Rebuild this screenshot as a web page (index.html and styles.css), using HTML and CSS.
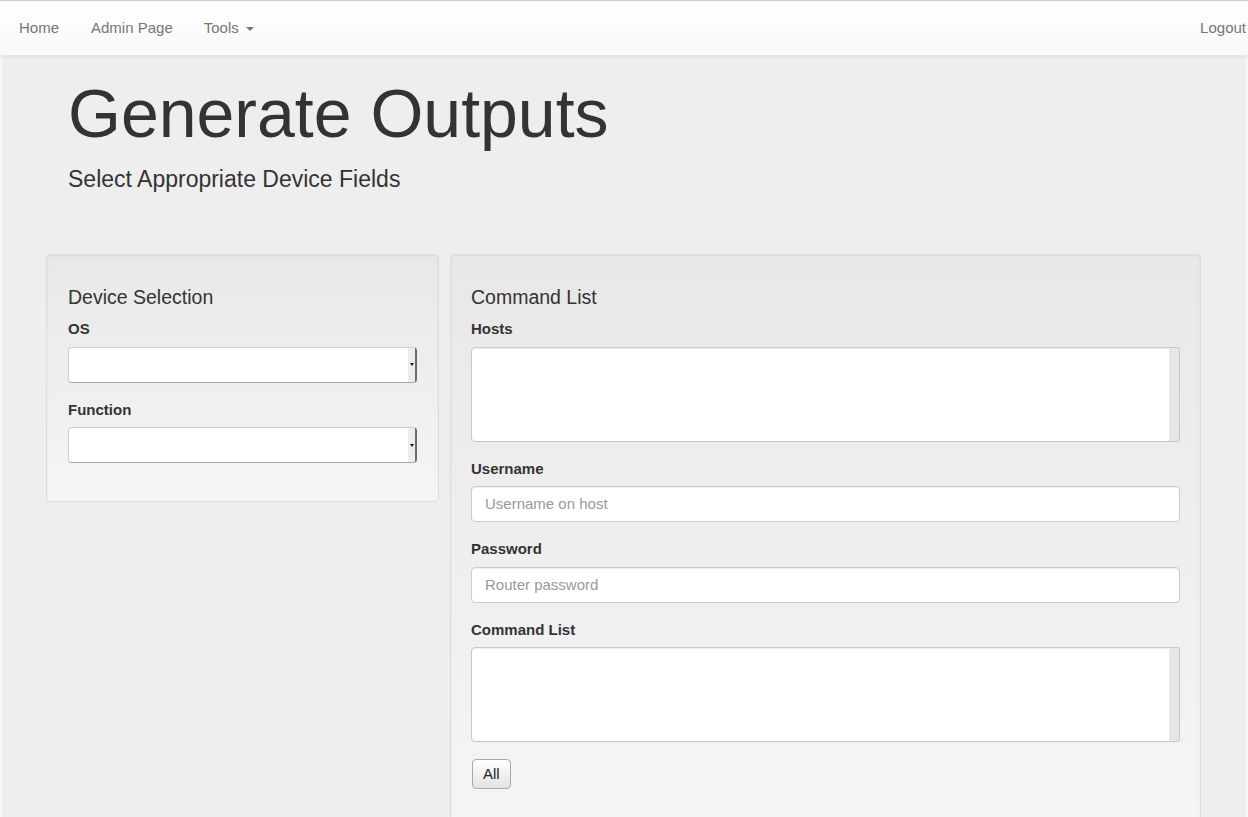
FILE: index.html
```html
<!DOCTYPE html>
<html lang="en">
<head>
<meta charset="utf-8">
<title>Generate Outputs</title>
<link rel="stylesheet" href="styles.css">
</head>
<body>
<nav class="navbar">
  <ul class="nav">
    <li><a href="#">Home</a></li>
    <li><a href="#">Admin Page</a></li>
    <li><a href="#">Tools <span class="caret"></span></a></li>
  </ul>
  <ul class="nav nav-right">
    <li><a href="#">Logout</a></li>
  </ul>
</nav>
<main class="jumbotron">
  <div class="header">
    <h1>Generate Outputs</h1>
    <p class="lead">Select Appropriate Device Fields</p>
  </div>
  <div class="row">
    <section class="well well-device">
      <h4>Device Selection</h4>
      <div class="form-group">
        <label>OS</label>
        <div class="select"><span class="select-fill"></span><span class="select-arrow"><span class="tri"></span></span></div>
      </div>
      <div class="form-group">
        <label>Function</label>
        <div class="select"><span class="select-fill"></span><span class="select-arrow"><span class="tri"></span></span></div>
      </div>
    </section>
    <section class="well">
      <h4>Command List</h4>
      <div class="form-group">
        <label>Hosts</label>
        <div class="textarea"><span class="ta-fill"></span><span class="scroll"></span></div>
      </div>
      <div class="form-group">
        <label>Username</label>
        <div class="input placeholder">Username on host</div>
      </div>
      <div class="form-group">
        <label>Password</label>
        <div class="input placeholder">Router password</div>
      </div>
      <div class="form-group">
        <label>Command List</label>
        <div class="textarea"><span class="ta-fill"></span><span class="scroll"></span></div>
      </div>
      <div class="form-group btn-group">
        <button class="btn" type="button">All</button>
      </div>
    </section>
  </div>
</main>
</body>
</html>
```
FILE: styles.css
```css
html, body {
  margin: 0;
  padding: 0;
}
body {
  font-family: "Liberation Sans", Arial, Helvetica, sans-serif;
  font-size: 15px;
  line-height: 1.428;
  color: #333;
  background: #f6f6f6;
  overflow: hidden;
}
.navbar {
  position: relative;
  z-index: 1;
  height: 54px;
  border-top: 1px solid #cdcdcd;
  background: linear-gradient(to bottom, #ffffff 0%, #f8f8f8 100%);
  box-shadow: 0 1px 5px rgba(0, 0, 0, 0.08);
  display: flex;
  align-items: center;
  justify-content: space-between;
  padding: 0 2px 0 3px;
}
.nav {
  list-style: none;
  margin: 0;
  padding: 0;
  display: flex;
}
.nav a {
  display: block;
  color: #777;
  text-decoration: none;
  padding: 0 16px;
  line-height: 54px;
}
.nav li:nth-child(3) a {
  padding-left: 15px;
}
.nav-right a {
  padding-right: 0;
}
.caret {
  display: inline-block;
  width: 0;
  height: 0;
  margin-left: 3px;
  vertical-align: middle;
  border-top: 4px solid #777;
  border-left: 4px solid transparent;
  border-right: 4px solid transparent;
}
.jumbotron {
  margin: 0 2px;
  background: #eeeeee;
  padding-top: 21px;
  min-height: 800px;
}
.header {
  padding-left: 66px;
}
h1 {
  margin: 0;
  font-size: 68px;
  font-weight: normal;
  line-height: 1.1;
  color: #333;
}
.lead {
  margin: 12px 0 0;
  font-size: 23px;
  line-height: 1.4;
}
.row {
  display: grid;
  grid-template-columns: 393px 751px;
  column-gap: 11px;
  align-items: start;
  margin: 59px 0 0 44px;
}
.well {
  padding: 20px 20px 22px;
  border: 1px solid #dcdcdc;
  border-radius: 4px;
  background: linear-gradient(to bottom, #e8e8e8 0%, #f5f5f5 100%);
  box-shadow: inset 0 1px 3px rgba(0, 0, 0, 0.05);
}
.well-device {
  padding-left: 21px;
}
h4 {
  margin: 12px 0 10px;
  font-size: 19.5px;
  font-weight: normal;
  line-height: 1.1;
}
.form-group {
  margin-bottom: 16px;
}
label {
  display: block;
  font-weight: bold;
  line-height: 21.4px;
  margin-bottom: 7px;
}
.select {
  display: flex;
  height: 36px;
  box-sizing: border-box;
  background: #fff;
  border: 1px solid #cfcfcf;
  border-right: 2px solid #6a6a6a;
  border-bottom-color: #a8a8a8;
  border-radius: 4px;
  margin-right: 1px;
}
.select-fill {
  flex: 1;
}
.select-arrow {
  width: 7px;
  background: #ececec;
  display: flex;
  align-items: center;
  justify-content: center;
}
.tri {
  width: 0;
  height: 0;
  border-top: 3px solid #111;
  border-left: 2.5px solid transparent;
  border-right: 2.5px solid transparent;
}
.textarea {
  display: flex;
  height: 95px;
  box-sizing: border-box;
  background: #fff;
  border: 1px solid #c8c8c8;
  border-radius: 4px 2px 2px 4px;
  box-shadow: inset 0 1px 1px rgba(0, 0, 0, 0.075);
}
.ta-fill {
  flex: 1;
}
.scroll {
  width: 10px;
  background: #e6e6e6;
}
.input {
  height: 36px;
  box-sizing: border-box;
  background: #fff;
  border: 1px solid #cccccc;
  border-radius: 4px;
  box-shadow: inset 0 1px 1px rgba(0, 0, 0, 0.075);
  padding: 0 13px;
  line-height: 34px;
}
.placeholder {
  color: #999;
}
.btn-group {
  margin-top: 17px;
}
.btn {
  font-family: "Liberation Sans", Arial, Helvetica, sans-serif;
  font-size: 15px;
  line-height: 20px;
  color: #222;
  height: 30px;
  padding: 4px 10px;
  margin-left: 1px;
  border: 1px solid #a9a9a9;
  border-radius: 4px;
  background: linear-gradient(to bottom, #ffffff 0%, #e3e3e3 100%);
}
```
